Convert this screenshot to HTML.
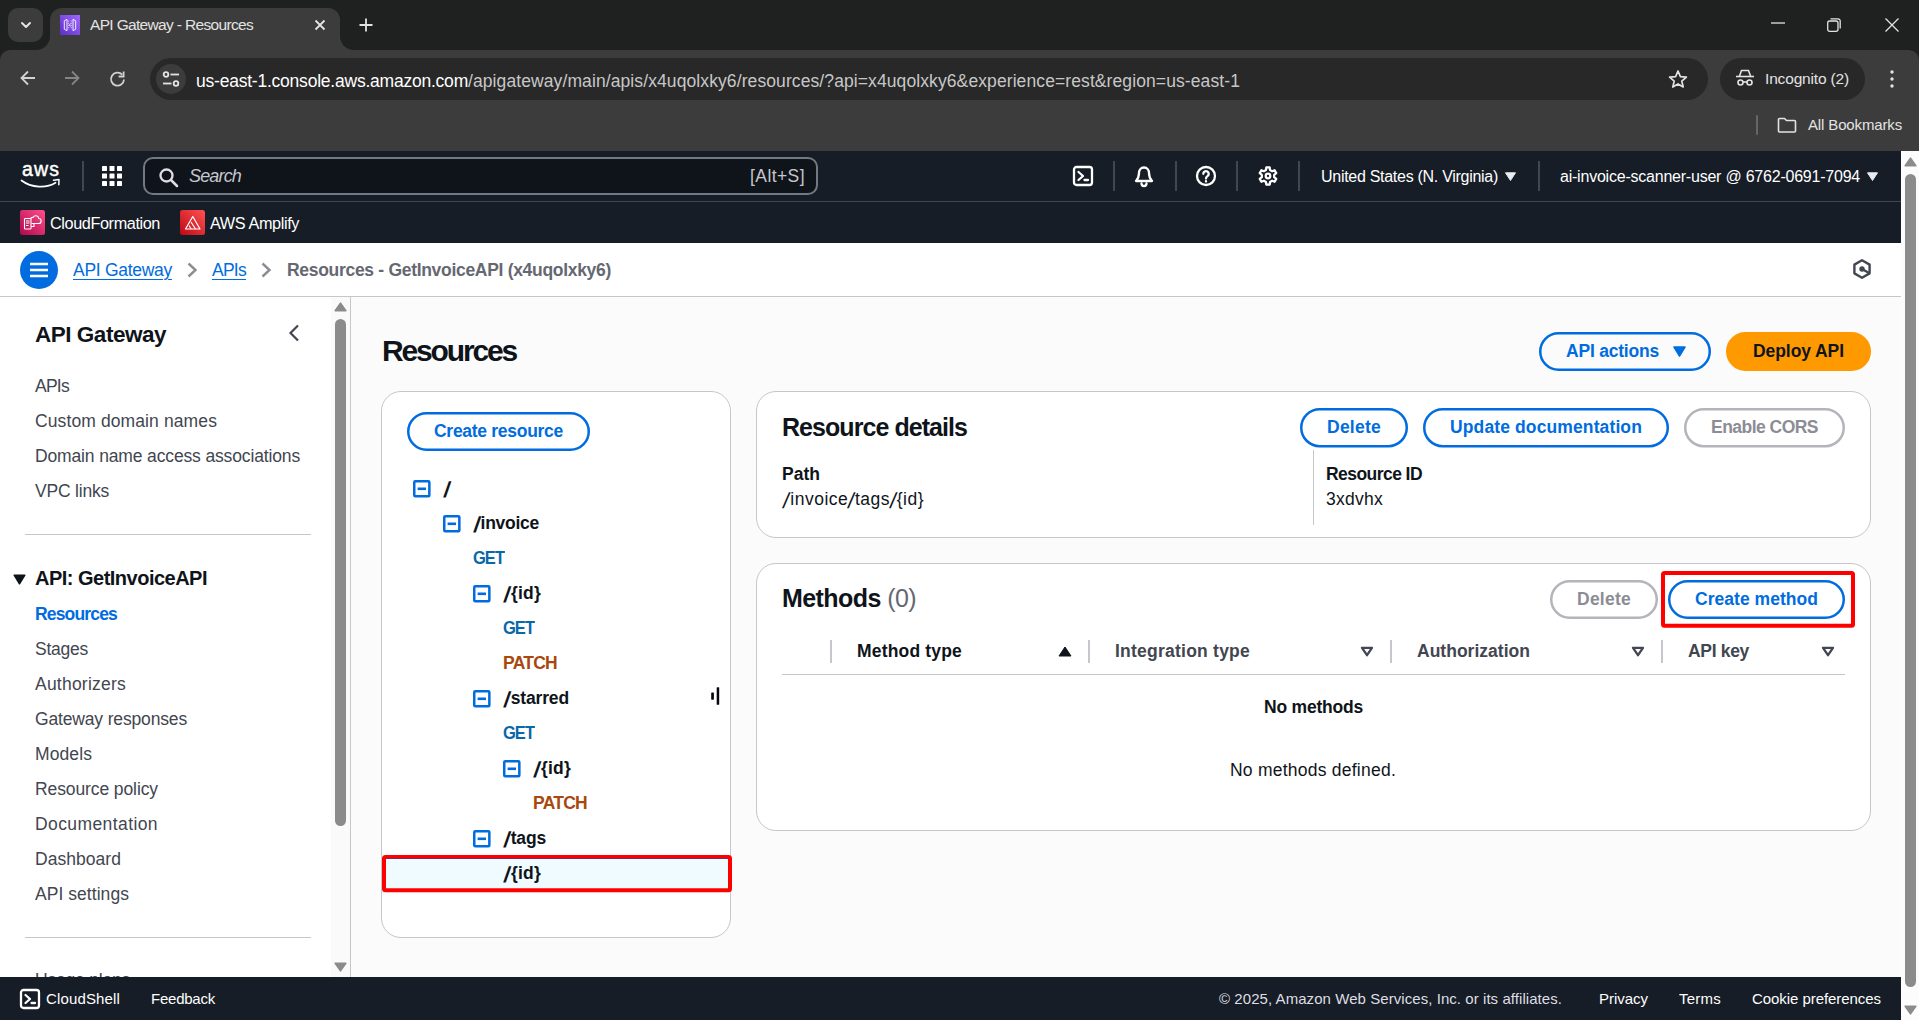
<!DOCTYPE html>
<html lang="en"><head><meta charset="utf-8"><title>API Gateway - Resources</title>
<style>
*{box-sizing:border-box;margin:0;padding:0}
html,body{width:1919px;height:1020px;overflow:hidden;background:#fbfbfb;font-family:"Liberation Sans",sans-serif}
.a{position:absolute}
.t{position:absolute;white-space:nowrap;line-height:20px;font-size:17.5px}
.b{font-weight:bold}
svg{position:absolute;overflow:visible}
.btn{position:absolute;border:2px solid #006ce0;border-radius:20px;height:39px}
.panel{position:absolute;background:#fff;border:1px solid #c6c6cd;border-radius:20px}
.sep{position:absolute;width:1px;background:#424650}
.nav{color:#424650}
.blue{color:#006ce0}
.sl{display:inline-block;transform:skewX(-9deg) scale(1.25,1.25);transform-origin:0 30%;margin:0 .05em 0 .03em}
.sl:first-child{margin:0 .07em 0 .1em}
.ico{fill:none;stroke:#fff;stroke-width:2.3;stroke-linejoin:round;stroke-linecap:round}
</style></head><body>
<div class="a" style="left:0;top:0;width:1919px;height:151px;background:#1f2020"></div>
<div class="a" style="left:0;top:50px;width:1919px;height:101px;background:#3c3c3c;border-radius:10px 10px 0 0"></div>
<div class="a" style="left:8px;top:8px;width:35px;height:34px;border-radius:10px;background:#3c3c3c"></div>
<svg style="left:19px;top:20px" width="14" height="10" viewBox="0 0 14 10"><path d="M3 3l4 4 4-4" fill="none" stroke="#e3e3e3" stroke-width="2" stroke-linecap="round" stroke-linejoin="round"></path></svg>
<div class="a" style="left:50px;top:7.500px;width:290px;height:42.500px;border-radius:12px 12px 0 0;background:#3c3c3c"></div>
<svg style="left:36px;top:36px" width="14" height="14"><path d="M14 0v14H0A14 14 0 0 0 14 0z" fill="#3c3c3c"></path></svg>
<svg style="left:340px;top:36px" width="14" height="14"><path d="M0 0v14h14A14 14 0 0 1 0 0z" fill="#3c3c3c"></path></svg>
<svg style="left:60px;top:15px" width="20" height="20" viewBox="0 0 20 20"><defs><linearGradient id="fg" x1="0" y1="1" x2="1" y2="0"><stop offset="0" stop-color="#5a30c8"></stop><stop offset="1" stop-color="#a166ff"></stop></linearGradient></defs><rect width="20" height="20" fill="url(#fg)"></rect><g fill="none" stroke="#fff" stroke-width="0.9" stroke-linejoin="round"><path d="M7 4.300L4.300 5.800v8.400L7 15.700zM13 4.300l2.700 1.500v8.400L13 15.700z"></path><path d="M8.700 5.500v9M11.300 5.500v9" stroke-dasharray="1.200 1" stroke-width="0.800" opacity=".85"></path><path d="M10.700 8.700L9.300 10l1.400 1.300" stroke-width="1"></path></g></svg>
<span class="t" style="left: 90px; top: 15px; font-size: 15.5px; color: rgb(227, 227, 227); letter-spacing: -0.666px;">API Gateway - Resources</span>
<svg style="left:314px;top:19px" width="12" height="12" viewBox="0 0 12 12"><path d="M1.500 1.500l9 9M10.500 1.500l-9 9" stroke="#e3e3e3" stroke-width="1.800" fill="none"></path></svg>
<svg style="left:359px;top:18px" width="14" height="14" viewBox="0 0 14 14"><path d="M7 0.500v13M0.500 7h13" stroke="#e3e3e3" stroke-width="1.800" fill="none"></path></svg>
<svg style="left:1771px;top:22px" width="14" height="2"><path d="M0 1h14" stroke="#e3e3e3" stroke-width="1.300"></path></svg>
<svg style="left:1827px;top:18px" width="14" height="14" viewBox="0 0 14 14"><rect x="0.700" y="3" width="10.300" height="10.300" rx="2" fill="none" stroke="#e3e3e3" stroke-width="1.300"></rect><path d="M3.500 0.800h7.500a2.200 2.200 0 0 1 2.200 2.200v7.500" fill="none" stroke="#e3e3e3" stroke-width="1.300"></path></svg>
<svg style="left:1884.500px;top:18px" width="14" height="14" viewBox="0 0 14 14"><path d="M0.500 0.500l13 13M13.500 0.500l-13 13" stroke="#e3e3e3" stroke-width="1.300" fill="none"></path></svg>
<!-- toolbar -->
<svg style="left:19px;top:69.300px" width="18" height="18" viewBox="0 0 18 18"><path d="M16 9H3M9 2.500L2.500 9 9 15.500" fill="none" stroke="#d2d2d2" stroke-width="1.800"></path></svg>
<svg style="left:63px;top:69.300px" width="18" height="18" viewBox="0 0 18 18"><path d="M2 9h13M9 2.500L15.500 9 9 15.500" fill="none" stroke="#858585" stroke-width="1.800"></path></svg>
<svg style="left:107.500px;top:69.500px" width="18" height="18" viewBox="0 0 18 18"><path d="M16 9.500A6.500 6.500 0 1 1 14.200 4.600" fill="none" stroke="#d2d2d2" stroke-width="1.800"></path><path d="M15.600 1.500v5h-5" fill="none" stroke="#d2d2d2" stroke-width="1.800"></path></svg>
<div class="a" style="left:150px;top:58px;width:1558px;height:42px;border-radius:21px;background:#282828"></div>
<div class="a" style="left:156px;top:64px;width:30px;height:30px;border-radius:15px;background:#3c3c3c"></div>
<svg style="left:162px;top:71px" width="18" height="16" viewBox="0 0 18 16"><g fill="none" stroke="#e3e3e3" stroke-width="1.800"><circle cx="4" cy="3.500" r="2.300"></circle><path d="M8.500 3.500H17"></path><circle cx="14" cy="12.500" r="2.300"></circle><path d="M1 12.500h8.500"></path></g></svg>
<span class="t" style="left: 196px; top: 70.5px; font-size: 17.5px; color: rgb(255, 255, 255); letter-spacing: -0.224px;">us-east-1.console.aws.amazon.com</span>
<span class="t" style="left: 468px; top: 70.5px; font-size: 17.5px; color: rgb(199, 199, 199); letter-spacing: 0.097px;">/apigateway/main/apis/x4uqolxky6/resources/?api=x4uqolxky6&amp;experience=rest&amp;region=us-east-1</span>
<svg style="left:1668px;top:69px" width="20" height="20" viewBox="0 0 20 20"><path d="M10 2l2.400 5.600 6 .5-4.600 4 1.400 5.900L10 14.900 4.800 18l1.400-5.900-4.600-4 6-.5z" fill="none" stroke="#e3e3e3" stroke-width="1.700" stroke-linejoin="round"></path></svg>
<div class="a" style="left:1720px;top:58px;width:145px;height:42px;border-radius:21px;background:#282828"></div>
<svg style="left:1735px;top:69px" width="20" height="18" viewBox="0 0 20 18"><g fill="none" stroke="#e3e3e3" stroke-width="1.600"><path d="M1 7.500h18"></path><path d="M4.500 7l2-5.500h7l2 5.500"></path><circle cx="5.500" cy="13.500" r="2.500"></circle><circle cx="14.500" cy="13.500" r="2.500"></circle><path d="M8 13h4"></path></g></svg>
<span class="t" style="left: 1765px; top: 69px; font-size: 15.5px; color: rgb(227, 227, 227); letter-spacing: -0.167px;">Incognito (2)</span>
<svg style="left:1890px;top:69px" width="4" height="20" viewBox="0 0 4 20"><circle cx="2" cy="3" r="1.700" fill="#e3e3e3"></circle><circle cx="2" cy="10" r="1.700" fill="#e3e3e3"></circle><circle cx="2" cy="17" r="1.700" fill="#e3e3e3"></circle></svg>
<!-- bookmarks -->
<div class="a" style="left:1756px;top:115px;width:2px;height:20px;background:#666;border-radius:1px"></div>
<svg style="left:1777px;top:117px" width="20" height="16" viewBox="0 0 20 16"><path d="M1.500 2.500a1 1 0 0 1 1-1h5l2 2h8a1 1 0 0 1 1 1v9.500a1 1 0 0 1-1 1h-15a1 1 0 0 1-1-1z" fill="none" stroke="#e3e3e3" stroke-width="1.600"></path></svg>
<span class="t" style="left: 1808px; top: 115px; font-size: 15px; color: rgb(227, 227, 227); letter-spacing: -0.143px;">All Bookmarks</span>

<div class="a" style="left:0;top:151px;width:1901px;height:92px;background:#161d26"></div>
<div class="a" style="left:0;top:201px;width:1901px;height:1px;background:#424650"></div>
<span class="t" style="left: 22px; top: 159px; font-size: 19.5px; color: rgb(255, 255, 255); -webkit-text-stroke: 0.45px rgb(255, 255, 255); letter-spacing: 1.104px;">aws</span>
<svg style="left:21px;top:178.800px" width="40" height="11" viewBox="0 0 40 11"><path d="M0.500 1.500c10 7.500 25 8 34 2.200" fill="none" stroke="#fff" stroke-width="1.800" stroke-linecap="round"></path><path d="M32.500 1.200l5.500-.7-.2 5.300" fill="none" stroke="#fff" stroke-width="1.500" stroke-linecap="round" stroke-linejoin="round"></path></svg>
<div class="sep" style="left:82px;top:161px;height:30px;width:1.500px"></div>
<svg style="left:102px;top:166px" width="20" height="20" viewBox="0 0 20 20"><g fill="#fff"><rect x="0" y="0" width="5" height="5" rx=".6"></rect><rect x="7.500" y="0" width="5" height="5" rx=".6"></rect><rect x="15" y="0" width="5" height="5" rx=".6"></rect><rect x="0" y="7.500" width="5" height="5" rx=".6"></rect><rect x="7.500" y="7.500" width="5" height="5" rx=".6"></rect><rect x="15" y="7.500" width="5" height="5" rx=".6"></rect><rect x="0" y="15" width="5" height="5" rx=".6"></rect><rect x="7.500" y="15" width="5" height="5" rx=".6"></rect><rect x="15" y="15" width="5" height="5" rx=".6"></rect></g></svg>
<div class="a" style="left:143px;top:157px;width:675px;height:38px;border:2px solid #747882;border-radius:10px;background:#0f141a"></div>
<svg style="left:158px;top:167px" width="22" height="22" viewBox="0 0 22 22"><circle cx="8.500" cy="8.500" r="6" fill="none" stroke="#dedee3" stroke-width="2.300"></circle><path d="M13 13l6 6" stroke="#dedee3" stroke-width="2.500" stroke-linecap="round"></path></svg>
<span class="t" style="left: 189px; top: 166px; font-size: 18px; font-style: italic; color: rgb(198, 198, 205); letter-spacing: -0.841px;">Search</span>
<span class="t" style="left: 750px; top: 166px; font-size: 17.5px; color: rgb(198, 198, 205); letter-spacing: 0.422px;">[Alt+S]</span>
<!-- right icons -->
<svg style="left:1073px;top:166px" width="20" height="20" viewBox="0 0 20 20" class="ico"><rect x="1" y="1" width="18" height="18" rx="2.500"></rect><path d="M5.500 6l4.500 4-4.500 4M11.500 14h3.500"></path></svg>
<div class="sep" style="left:1113px;top:161px;height:30px;width:1.500px"></div>
<svg style="left:1134px;top:166px" width="20" height="20" viewBox="0 0 20 20" class="ico"><path d="M10 1.500c-3.200 0-5 2.500-5 5.500 0 4-1.200 6-3 8h16c-1.800-2-3-4-3-8 0-3-1.800-5.500-5-5.500z"></path><path d="M7.500 17.500a2.500 2.500 0 0 0 5 0"></path></svg>
<div class="sep" style="left:1175px;top:161px;height:30px;width:1.500px"></div>
<svg style="left:1196px;top:166px" width="20" height="20" viewBox="0 0 20 20" class="ico"><circle cx="10" cy="10" r="9"></circle><path d="M7.300 7.800a2.700 2.700 0 1 1 4.200 2.300c-1 .7-1.500 1.200-1.500 2.400"></path><path d="M10 15.200v.3" stroke-width="2.300"></path></svg>
<div class="sep" style="left:1236px;top:161px;height:30px;width:1.500px"></div>
<svg style="left:1258px;top:166px" width="20" height="20" viewBox="0 0 20 20" class="ico" stroke-width="2.3"><circle cx="10" cy="10" r="2.300"></circle><path d="M12.05 4.04 L11.66 1.46 L8.34 1.46 L7.95 4.04 L5.87 5.25 L3.43 4.29 L1.77 7.17 L3.82 8.80 L3.82 11.20 L1.77 12.83 L3.43 15.71 L5.87 14.75 L7.95 15.96 L8.34 18.54 L11.66 18.54 L12.05 15.96 L14.13 14.75 L16.57 15.71 L18.23 12.83 L16.18 11.20 L16.18 8.80 L18.23 7.17 L16.57 4.29 L14.13 5.25z"></path></svg>
<div class="sep" style="left:1298px;top:161px;height:30px;width:1.500px"></div>
<span class="t" style="left: 1321px; top: 167px; font-size: 16px; color: rgb(255, 255, 255); letter-spacing: -0.284px;">United States (N. Virginia)</span>
<svg style="left:1505px;top:172px" width="11" height="9"><path d="M0.500 0.800h10l-5 7.700z" fill="#ebebf0" stroke="#ebebf0" stroke-width="1" stroke-linejoin="round"></path></svg>
<div class="sep" style="left:1538px;top:161px;height:30px;width:1.500px"></div>
<span class="t" style="left: 1560px; top: 167px; font-size: 16px; color: rgb(255, 255, 255); letter-spacing: -0.221px;">ai-invoice-scanner-user @ 6762-0691-7094</span>
<svg style="left:1867px;top:172px" width="11" height="9"><path d="M0.500 0.800h10l-5 7.700z" fill="#ebebf0" stroke="#ebebf0" stroke-width="1" stroke-linejoin="round"></path></svg>
<!-- favorites -->
<svg style="left:20px;top:210px" width="25" height="25" viewBox="0 0 25 25"><defs><linearGradient id="cf" x1="0" y1="1" x2="1" y2="0"><stop offset="0" stop-color="#b0084d"></stop><stop offset="1" stop-color="#ff4f8b"></stop></linearGradient></defs><rect width="25" height="25" rx="2.500" fill="url(#cf)"></rect><g fill="none" stroke="#fff" stroke-width="1.100" stroke-linejoin="round"><rect x="4.500" y="8.500" width="6.500" height="10.500" rx=".8"></rect><path d="M6 11h3.500M6 13h3.500M6 15.500h2.500"></path><path d="M11.500 13.500h7a2.500 2.500 0 0 0 .3-5 3 3 0 0 0-5.700-1 2.200 2.200 0 0 0-2.600 1.500"></path><path d="M11 16.500h3v-3"></path></g></svg>
<span class="t" style="left: 50px; top: 212.6px; font-size: 16.25px; color: rgb(255, 255, 255); letter-spacing: -0.401px;">CloudFormation</span>
<svg style="left:180px;top:210px" width="25" height="25" viewBox="0 0 25 25"><defs><linearGradient id="am" x1="0" y1="1" x2="1" y2="0"><stop offset="0" stop-color="#bd0816"></stop><stop offset="1" stop-color="#ff5252"></stop></linearGradient></defs><rect width="25" height="25" rx="2.500" fill="url(#am)"></rect><g fill="none" stroke="#fff" stroke-width="1.200" stroke-linejoin="round"><path d="M12.800 6.500L5.500 19h14.500z"></path><path d="M11 12l4.500 7M9 15.500l2.200 3.500"></path></g></svg>
<span class="t" style="left: 210px; top: 212.6px; font-size: 16.25px; color: rgb(255, 255, 255); letter-spacing: -0.392px;">AWS Amplify</span>
<!-- breadcrumb -->
<div class="a" style="left:0;top:243px;width:1901px;height:53px;background:#fff"></div>
<div class="a" style="left:0;top:296px;width:1901px;height:1px;background:#c6c6cd"></div>
<div class="a" style="left:20px;top:251px;width:38px;height:38px;border-radius:19px;background:#006ce0"></div>
<svg style="left:30px;top:262px" width="18" height="16" viewBox="0 0 18 16"><path d="M0 2h18M0 8h18M0 14h18" stroke="#fff" stroke-width="2.300"></path></svg>
<span class="t blue" style="left: 73px; top: 259.5px; text-decoration: underline 1px; text-underline-offset: 3px; letter-spacing: -0.286px;">API Gateway</span>
<svg style="left:186px;top:261.500px" width="12" height="16" viewBox="0 0 12 16"><path d="M2.500 1.500L9.500 8 2.500 14.500" fill="none" stroke="#8c8c94" stroke-width="2.400"></path></svg>
<span class="t blue" style="left: 212px; top: 259.5px; text-decoration: underline 1px; text-underline-offset: 3px; letter-spacing: -0.742px;">APIs</span>
<svg style="left:260px;top:261.500px" width="12" height="16" viewBox="0 0 12 16"><path d="M2.500 1.500L9.500 8 2.500 14.500" fill="none" stroke="#8c8c94" stroke-width="2.400"></path></svg>
<span class="t b" style="left: 287px; top: 259.5px; color: rgb(101, 104, 113); letter-spacing: -0.304px;">Resources - GetInvoiceAPI (x4uqolxky6)</span>
<svg style="left:1852px;top:258px" width="20" height="22" viewBox="0 0 20 22"><path d="M10 2.300L17.600 6.650V15.350L10 19.700 2.400 15.350V6.650z" fill="none" stroke="#424650" stroke-width="2.400" stroke-linejoin="round"></path><circle cx="10" cy="11" r="2.700" fill="#424650"></circle><path d="M10 11l7 4" stroke="#424650" stroke-width="2.400"></path></svg>

<div class="a" style="left:0;top:297px;width:350px;height:680px;background:#fff"></div>
<div class="a" style="left:350px;top:297px;width:1px;height:680px;background:#c6c6cd"></div>
<div class="a" style="left:331px;top:297px;width:19px;height:680px;background:#fafafa"></div>
<svg style="left:334px;top:302px" width="13" height="10"><path d="M6.500 1.200l5.300 7.600h-10.600z" fill="#8b8b8b" stroke="#8b8b8b" stroke-width="1.600" stroke-linejoin="round"></path></svg>
<div class="a" style="left:335px;top:319px;width:11px;height:507px;border-radius:6px;background:#8b8b8b"></div>
<svg style="left:334px;top:962px" width="13" height="10"><path d="M1.200 1.200h10.600l-5.300 7.600z" fill="#8b8b8b" stroke="#8b8b8b" stroke-width="1.600" stroke-linejoin="round"></path></svg>
<span class="t b" style="left: 35px; top: 323px; font-size: 22.5px; line-height: 24px; color: rgb(15, 20, 26); letter-spacing: -0.483px;">API Gateway</span>
<svg style="left:288px;top:324px" width="12" height="18" viewBox="0 0 12 18"><path d="M10 1.500L2.500 9 10 16.500" fill="none" stroke="#424650" stroke-width="2.200"></path></svg>
<span class="t nav" style="left: 35px; top: 376px; letter-spacing: -0.742px;">APIs</span>
<span class="t nav" style="left: 35px; top: 411px; letter-spacing: 0.108px;">Custom domain names</span>
<span class="t nav" style="left: 35px; top: 446px; letter-spacing: -0.143px;">Domain name access associations</span>
<span class="t nav" style="left: 35px; top: 481px; letter-spacing: -0.207px;">VPC links</span>
<div class="a" style="left:25px;top:534px;width:286px;height:1px;background:#c6c6cd"></div>
<svg style="left:12.500px;top:574px" width="13" height="11"><path d="M1.200 1.200h10.600l-5.300 8.600z" fill="#0f141a" stroke="#0f141a" stroke-width="1.500" stroke-linejoin="round"></path></svg>
<span class="t b" style="left: 35px; top: 568px; font-size: 20px; color: rgb(15, 20, 26); letter-spacing: -0.509px;">API: GetInvoiceAPI</span>
<span class="t b blue" style="left: 35px; top: 604px; letter-spacing: -0.833px;">Resources</span>
<span class="t nav" style="left: 35px; top: 639px; letter-spacing: -0.247px;">Stages</span>
<span class="t nav" style="left: 35px; top: 674px; letter-spacing: 0.226px;">Authorizers</span>
<span class="t nav" style="left: 35px; top: 709px; letter-spacing: -0.157px;">Gateway responses</span>
<span class="t nav" style="left: 35px; top: 744px; letter-spacing: 0.096px;">Models</span>
<span class="t nav" style="left: 35px; top: 779px; letter-spacing: -0.1px;">Resource policy</span>
<span class="t nav" style="left: 35px; top: 814px; letter-spacing: 0.406px;">Documentation</span>
<span class="t nav" style="left: 35px; top: 849px; letter-spacing: 0.042px;">Dashboard</span>
<span class="t nav" style="left: 35px; top: 884px; letter-spacing: 0.051px;">API settings</span>
<div class="a" style="left:25px;top:937px;width:286px;height:1px;background:#c6c6cd"></div>
<span class="t nav" style="left: 35px; top: 970px; letter-spacing: -0.209px;">Usage plans</span>

<span class="t b" style="left: 382px; top: 334.6px; font-size: 30px; line-height: 32px; color: rgb(15, 20, 26); letter-spacing: -2.158px;">Resources</span>
<svg style="left:1539px;top:332px" width="172" height="39"><rect x="1.25" y="1.25" width="169.5" height="36.5" rx="18.25" fill="none" stroke="#006ce0" stroke-width="2.5"></rect></svg>
<span class="t b blue" style="left: 1566px; top: 341px; letter-spacing: -0.21px;">API actions</span>
<svg style="left:1672.5px;top:345.5px" width="13" height="11"><path d="M1 1h11l-5.5 9z" fill="#006ce0" stroke="#006ce0" stroke-width="1.5" stroke-linejoin="round"></path></svg>
<svg style="left:1726px;top:332px" width="145" height="39"><rect x="1.25" y="1.25" width="142.5" height="36.5" rx="18.25" fill="#ff9900" stroke="#ff9900" stroke-width="2.5"></rect></svg>
<span class="t b" style="left: 1753px; top: 341px; color: rgb(15, 20, 26); letter-spacing: -0.073px;">Deploy API</span>
<div class="panel" style="left:381px;top:391px;width:350px;height:547px"></div>
<svg style="left:407px;top:412px" width="183" height="39"><rect x="1.25" y="1.25" width="180.5" height="36.5" rx="18.25" fill="none" stroke="#006ce0" stroke-width="2.5"></rect></svg>
<span class="t b blue" style="left: 434px; top: 421px; letter-spacing: -0.285px;">Create resource</span>
<svg style="left:413.2px;top:480.2px" width="17.600" height="17.600"><rect x="1.250" y="1.250" width="15.100" height="15.100" rx="1" fill="none" stroke="#006ce0" stroke-width="2.500"></rect><path d="M4.600 8.800h8.400" stroke="#006ce0" stroke-width="2.600"></path></svg>
<span class="t b" style="left:443px;top:478.0px;color:#0f141a"><span class="sl">/</span></span>
<svg style="left:443.2px;top:515.2px" width="17.600" height="17.600"><rect x="1.250" y="1.250" width="15.100" height="15.100" rx="1" fill="none" stroke="#006ce0" stroke-width="2.500"></rect><path d="M4.600 8.800h8.400" stroke="#006ce0" stroke-width="2.600"></path></svg>
<span class="t b" style="left: 473px; top: 513px; color: rgb(15, 20, 26); letter-spacing: -0.27px;"><span class="sl">/</span>invoice</span>
<span class="t b" style="left: 473px; top: 548px; color: rgb(9, 105, 168); font-size: 16.5px; transform: scaleY(1.08); transform-origin: 0px 90%; letter-spacing: -0.974px;">GET</span>
<svg style="left:473.2px;top:585.2px" width="17.600" height="17.600"><rect x="1.250" y="1.250" width="15.100" height="15.100" rx="1" fill="none" stroke="#006ce0" stroke-width="2.500"></rect><path d="M4.600 8.800h8.400" stroke="#006ce0" stroke-width="2.600"></path></svg>
<span class="t b" style="left: 503px; top: 583px; color: rgb(15, 20, 26); letter-spacing: 0.194px;"><span class="sl">/</span>{id}</span>
<span class="t b" style="left: 503px; top: 618px; color: rgb(9, 105, 168); font-size: 16.5px; transform: scaleY(1.08); transform-origin: 0px 90%; letter-spacing: -0.974px;">GET</span>
<span class="t b" style="left: 503px; top: 653px; color: rgb(168, 72, 14); letter-spacing: -0.738px;">PATCH</span>
<svg style="left:473.2px;top:690.2px" width="17.600" height="17.600"><rect x="1.250" y="1.250" width="15.100" height="15.100" rx="1" fill="none" stroke="#006ce0" stroke-width="2.500"></rect><path d="M4.600 8.800h8.400" stroke="#006ce0" stroke-width="2.600"></path></svg>
<span class="t b" style="left: 503px; top: 688px; color: rgb(15, 20, 26); letter-spacing: -0.148px;"><span class="sl">/</span>starred</span>
<span class="t b" style="left: 503px; top: 723px; color: rgb(9, 105, 168); font-size: 16.5px; transform: scaleY(1.08); transform-origin: 0px 90%; letter-spacing: -0.974px;">GET</span>
<svg style="left:503.2px;top:760.2px" width="17.600" height="17.600"><rect x="1.250" y="1.250" width="15.100" height="15.100" rx="1" fill="none" stroke="#006ce0" stroke-width="2.500"></rect><path d="M4.600 8.800h8.400" stroke="#006ce0" stroke-width="2.600"></path></svg>
<span class="t b" style="left: 533px; top: 758px; color: rgb(15, 20, 26); letter-spacing: 0.194px;"><span class="sl">/</span>{id}</span>
<span class="t b" style="left: 533px; top: 793px; color: rgb(168, 72, 14); letter-spacing: -0.738px;">PATCH</span>
<svg style="left:473.2px;top:830.2px" width="17.600" height="17.600"><rect x="1.250" y="1.250" width="15.100" height="15.100" rx="1" fill="none" stroke="#006ce0" stroke-width="2.500"></rect><path d="M4.600 8.800h8.400" stroke="#006ce0" stroke-width="2.600"></path></svg>
<span class="t b" style="left: 503px; top: 828px; color: rgb(15, 20, 26); letter-spacing: -0.166px;"><span class="sl">/</span>tags</span>
<div class="a" style="left:382px;top:858px;width:349px;height:1px;background:#5a4fa0"></div>
<svg style="left:381.5px;top:854.5px" width="350" height="37.2"><rect x="2" y="2" width="346" height="33.2" rx="1.5" fill="#f0fbff" stroke="#ff0000" stroke-width="4"></rect></svg>
<div class="a" style="left:386px;top:858px;width:341px;height:1px;background:#7a2a6a"></div>
<span class="t b" style="left: 503px; top: 863px; color: rgb(15, 20, 26); letter-spacing: 0.194px;"><span class="sl">/</span>{id}</span>
<svg style="left:711px;top:687px" width="9" height="18" viewBox="0 0 9 18"><rect x="5.700" y="0.200" width="2.500" height="17.600" rx=".6" fill="#05070c"></rect><rect x="0.200" y="5.500" width="2.700" height="7.200" rx=".6" fill="#05070c"></rect></svg>
<!-- resource details -->
<div class="panel" style="left:756px;top:391px;width:1115px;height:147px"></div>
<span class="t b" style="left: 782px; top: 413.5px; font-size: 25px; line-height: 26px; color: rgb(15, 20, 26); letter-spacing: -0.943px;">Resource details</span>
<svg style="left:1300px;top:407.7px" width="108" height="39.4"><rect x="1.25" y="1.25" width="105.5" height="36.9" rx="18.45" fill="none" stroke="#006ce0" stroke-width="2.5"></rect></svg>
<span class="t b blue" style="left: 1327px; top: 417px; letter-spacing: 0.245px;">Delete</span>
<svg style="left:1423px;top:407.7px" width="246" height="39.4"><rect x="1.25" y="1.25" width="243.5" height="36.9" rx="18.45" fill="none" stroke="#006ce0" stroke-width="2.5"></rect></svg>
<span class="t b blue" style="left: 1450px; top: 417px; letter-spacing: 0.12px;">Update documentation</span>
<svg style="left:1684px;top:407.7px" width="161" height="39.4"><rect x="1.25" y="1.25" width="158.5" height="36.9" rx="18.45" fill="none" stroke="#b4b4bb" stroke-width="2.5"></rect></svg>
<span class="t b" style="left: 1711px; top: 417px; color: rgb(140, 140, 148); letter-spacing: -0.528px;">Enable CORS</span>
<span class="t b" style="left: 782px; top: 464px; color: rgb(15, 20, 26); letter-spacing: 0.016px;">Path</span>
<span class="t" style="left: 782px; top: 489px; color: rgb(15, 20, 26); letter-spacing: 0.486px;"><span class="sl">/</span>invoice<span class="sl">/</span>tags<span class="sl">/</span>{id}</span>
<div class="a" style="left:1313px;top:450px;width:1px;height:75px;background:#c6c6cd"></div>
<span class="t b" style="left: 1326px; top: 464px; color: rgb(15, 20, 26); letter-spacing: -0.557px;">Resource ID</span>
<span class="t" style="left: 1326px; top: 489px; color: rgb(15, 20, 26); letter-spacing: 0.258px;">3xdvhx</span>
<!-- methods -->
<div class="panel" style="left:756px;top:563px;width:1115px;height:268px"></div>
<span class="t" style="left: 782px; top: 585.3px; font-size: 25px; line-height: 26px; color: rgb(15, 20, 26); letter-spacing: -0.572px;"><span class="b">Methods</span> <span style="color:#656871">(0)</span></span>
<svg style="left:1550px;top:579.8px" width="108" height="39"><rect x="1.25" y="1.25" width="105.5" height="36.5" rx="18.25" fill="none" stroke="#b4b4bb" stroke-width="2.5"></rect></svg>
<span class="t b" style="left: 1577px; top: 589px; color: rgb(140, 140, 148); letter-spacing: 0.245px;">Delete</span>
<svg style="left:1668px;top:579.8px" width="177" height="39"><rect x="1.25" y="1.25" width="174.5" height="36.5" rx="18.25" fill="none" stroke="#006ce0" stroke-width="2.5"></rect></svg>
<span class="t b blue" style="left: 1695px; top: 589px; letter-spacing: 0.036px;">Create method</span>
<svg style="left:1661.4px;top:570.6px" width="194" height="56.7"><rect x="2" y="2" width="190" height="52.7" rx="1.5" fill="none" stroke="#ff0000" stroke-width="4"></rect></svg>
<div class="a" style="left:830px;top:640px;width:2px;height:23px;background:#c6c6cd"></div>
<span class="t b" style="left: 857px; top: 641px; color: rgb(15, 20, 26); letter-spacing: 0.176px;">Method type</span>
<svg style="left:1058px;top:646px" width="14" height="11"><path d="M7 1l6 9h-12z" fill="#0f141a" stroke="#0f141a" stroke-width="1" stroke-linejoin="round"></path></svg>
<div class="a" style="left:1088px;top:640px;width:2px;height:23px;background:#c6c6cd"></div>
<span class="t b" style="left: 1115px; top: 641px; color: rgb(66, 70, 80); letter-spacing: 0.233px;">Integration type</span>
<svg style="left:1360px;top:646px" width="14" height="11"><path d="M2 1.800h10l-5 7.400z" fill="none" stroke="#424650" stroke-width="2.300" stroke-linejoin="round"></path></svg>
<div class="a" style="left:1390px;top:640px;width:2px;height:23px;background:#c6c6cd"></div>
<span class="t b" style="left: 1417px; top: 641px; color: rgb(66, 70, 80); letter-spacing: 0.018px;">Authorization</span>
<svg style="left:1631px;top:646px" width="14" height="11"><path d="M2 1.800h10l-5 7.400z" fill="none" stroke="#424650" stroke-width="2.300" stroke-linejoin="round"></path></svg>
<div class="a" style="left:1661px;top:640px;width:2px;height:23px;background:#c6c6cd"></div>
<span class="t b" style="left: 1688px; top: 641px; color: rgb(66, 70, 80); letter-spacing: -0.319px;">API key</span>
<svg style="left:1821px;top:646px" width="14" height="11"><path d="M2 1.800h10l-5 7.400z" fill="none" stroke="#424650" stroke-width="2.300" stroke-linejoin="round"></path></svg>
<div class="a" style="left:782px;top:674px;width:1063px;height:1px;background:#c6c6cd"></div>
<span class="t b" style="left: 1264px; top: 697px; color: rgb(15, 20, 26); letter-spacing: -0.212px;">No methods</span>
<span class="t" style="left: 1230px; top: 760px; color: rgb(15, 20, 26); letter-spacing: 0.237px;">No methods defined.</span>

<div class="a" style="left:0;top:977px;width:1901px;height:43px;background:#161d26"></div>
<svg style="left:20px;top:989px" width="20" height="20" viewBox="0 0 20 20" class="ico"><rect x="1" y="1" width="18" height="18" rx="2.500"></rect><path d="M5.500 6l4.500 4-4.500 4M11.500 14h3.500"></path></svg>
<span class="t" style="left: 46px; top: 989px; font-size: 15px; color: rgb(255, 255, 255); letter-spacing: 0.145px;">CloudShell</span>
<span class="t" style="left: 151px; top: 989px; font-size: 15px; color: rgb(255, 255, 255); letter-spacing: -0.234px;">Feedback</span>
<span class="t" style="left: 1219px; top: 989px; font-size: 15px; color: rgb(222, 222, 227); letter-spacing: 0.061px;">© 2025, Amazon Web Services, Inc. or its affiliates.</span>
<span class="t" style="left: 1599px; top: 989px; font-size: 15px; color: rgb(255, 255, 255); letter-spacing: -0.027px;">Privacy</span>
<span class="t" style="left: 1679px; top: 989px; font-size: 15px; color: rgb(255, 255, 255); letter-spacing: 0.231px;">Terms</span>
<span class="t" style="left: 1752px; top: 989px; font-size: 15px; color: rgb(255, 255, 255); letter-spacing: -0.06px;">Cookie preferences</span>
<!-- page scrollbar -->
<div class="a" style="left:1901px;top:151px;width:18px;height:869px;background:#fcfcfc"></div>
<svg style="left:1904px;top:157px" width="13" height="10"><path d="M6.500 1.200l5.300 7.600h-10.600z" fill="#8b8b8b" stroke="#8b8b8b" stroke-width="1.600" stroke-linejoin="round"></path></svg>
<div class="a" style="left:1905px;top:173.500px;width:11px;height:813.500px;border-radius:6px;background:#8b8b8b"></div>
<svg style="left:1904px;top:1005px" width="13" height="10"><path d="M1.200 1.200h10.600l-5.300 7.600z" fill="#8b8b8b" stroke="#8b8b8b" stroke-width="1.600" stroke-linejoin="round"></path></svg>


</body></html>
